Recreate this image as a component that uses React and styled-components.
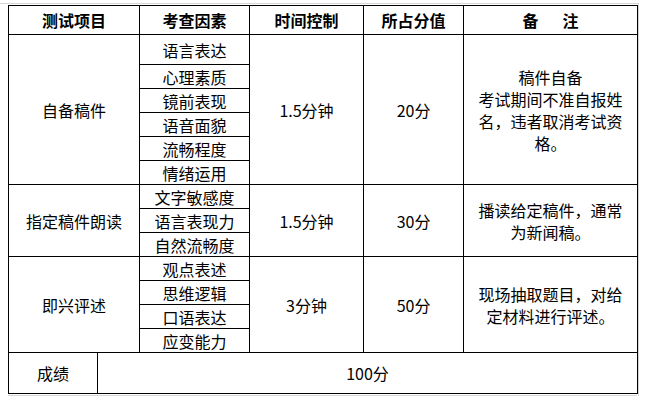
import React from "react";
import styled, { createGlobalStyle } from "styled-components";

const GlobalStyle = createGlobalStyle`
  html, body {
    margin: 0;
    padding: 0;
    background: #ffffff;
  }
  body {
    font-family: "Noto Sans CJK SC", "Liberation Sans", sans-serif;
    color: #000000;
  }
`;

const Frame = styled.div`
  width: 638px;
  margin-top: 3px;
  padding-top: 1px;
  border-top: 1px solid #d6d6d6;
  border-right: 1px solid #d6d6d6;
`;

const TableBox = styled.div`
  margin-left: 8px;
  width: 629px;
  padding-bottom: 1px;
  border-bottom: 1px solid #d6d6d6;
`;

const Table = styled.table`
  width: 629px;
  table-layout: fixed;
  border-collapse: collapse;
  font-size: 16px;
  line-height: 20px;
`;

const Col = styled.col`
  width: ${(p) => p.$w}px;
`;

const Th = styled.th`
  height: 28px;
  padding: 0;
  border: 1px solid #000000;
  font-weight: 700;
  text-align: center;
  vertical-align: middle;
`;

const Td = styled.td`
  height: ${(p) => p.$h || 23}px;
  padding: 0;
  border: 1px solid #000000;
  text-align: center;
  vertical-align: middle;
  white-space: nowrap;
`;

const NoteCell = styled(Td)`
  padding: 0 12px;
  white-space: normal;
  line-height: 22px;
`;

const Gap = styled.span`
  display: inline-block;
  width: 24px;
`;

const groups = [
  {
    item: "自备稿件",
    factors: ["语言表达", "心理素质", "镜前表现", "语音面貌", "流畅程度", "情绪运用"],
    first: 29,
    time: "1.5分钟",
    score: "20分",
    note: (
      <>
        稿件自备
        <br />
        考试期间不准自报姓名，违者取消考试资格。
      </>
    ),
  },
  {
    item: "指定稿件朗读",
    factors: ["文字敏感度", "语言表现力", "自然流畅度"],
    time: "1.5分钟",
    score: "30分",
    note: "播读给定稿件，通常为新闻稿。",
  },
  {
    item: "即兴评述",
    factors: ["观点表述", "思维逻辑", "口语表达", "应变能力"],
    time: "3分钟",
    score: "50分",
    note: "现场抽取题目，对给定材料进行评述。",
  },
];

export default function App() {
  return (
    <>
      <GlobalStyle />
      <Frame>
        <TableBox>
          <Table>
            <colgroup>
              <Col $w={89} />
              <Col $w={42} />
              <Col $w={110} />
              <Col $w={114} />
              <Col $w={100} />
              <Col $w={174} />
            </colgroup>
            <thead>
              <tr>
                <Th colSpan={2}>测试项目</Th>
                <Th>考查因素</Th>
                <Th>时间控制</Th>
                <Th>所占分值</Th>
                <Th>
                  备<Gap />注
                </Th>
              </tr>
            </thead>
            <tbody>
              {groups.map((g) =>
                g.factors.map((f, i) => (
                  <tr key={g.item + f}>
                    {i === 0 && (
                      <Td colSpan={2} rowSpan={g.factors.length}>
                        {g.item}
                      </Td>
                    )}
                    <Td $h={i === 0 && g.first ? g.first : 23}>{f}</Td>
                    {i === 0 && (
                      <>
                        <Td rowSpan={g.factors.length}>{g.time}</Td>
                        <Td rowSpan={g.factors.length}>{g.score}</Td>
                        <NoteCell rowSpan={g.factors.length}>{g.note}</NoteCell>
                      </>
                    )}
                  </tr>
                ))
              )}
              <tr>
                <Td $h={40}>成绩</Td>
                <Td colSpan={5}>100分</Td>
              </tr>
            </tbody>
          </Table>
        </TableBox>
      </Frame>
    </>
  );
}
